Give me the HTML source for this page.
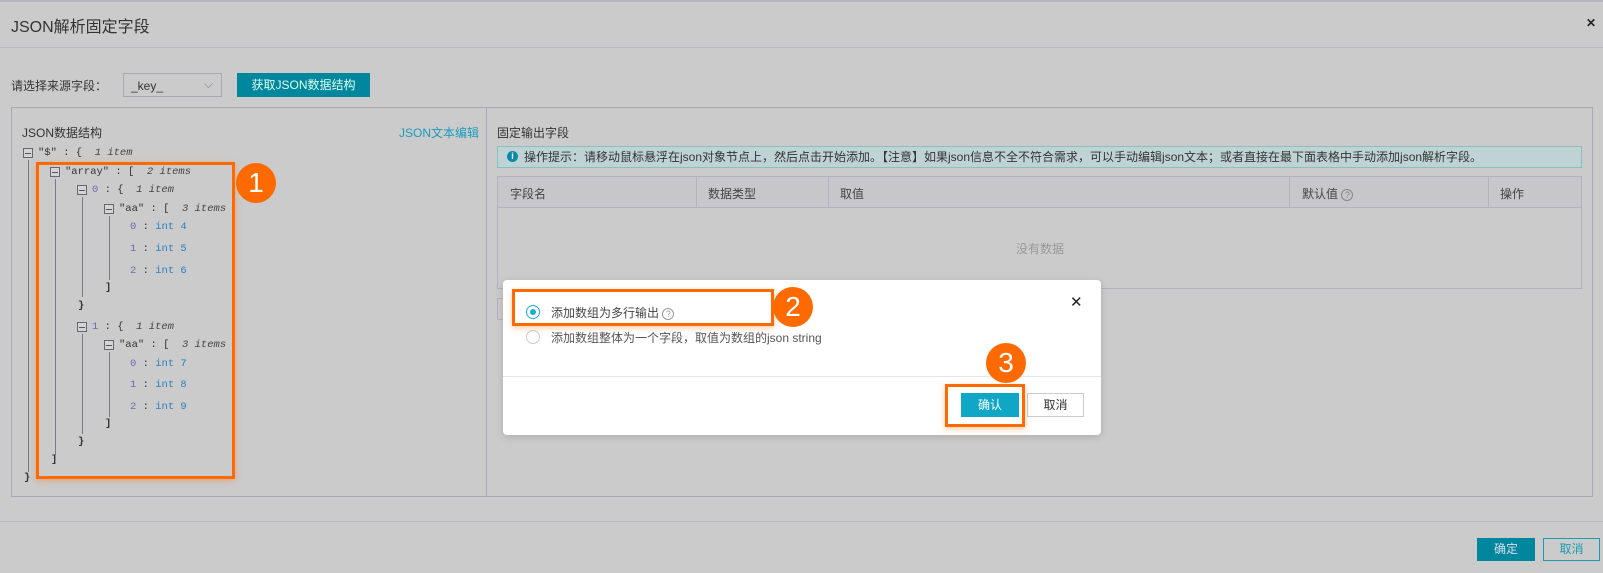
<!DOCTYPE html>
<html><head><meta charset="utf-8"><style>
*{margin:0;padding:0;box-sizing:border-box}
body{width:1603px;height:573px;background:#cbcbcb;font-family:"Liberation Sans","Noto Sans CJK SC",sans-serif;color:#3c3c3c;position:relative;overflow:hidden;font-size:12px}
.a{position:absolute;white-space:nowrap}
.t{font-family:"Liberation Mono","DejaVu Sans Mono",monospace;font-size:10.5px;color:#333;line-height:14px}
.t i{color:#444}
.k{color:#6a6ab8}.n{color:#2a7fc0}
.ic{position:absolute;width:10px;height:10px;border:1px solid #667;background:#d4d4d4}
.ic:after{content:"";position:absolute;left:1px;right:1px;top:3.5px;height:1px;background:#556}
.vl{position:absolute;width:1px;background:#7a7a88}
.circ{position:absolute;width:40px;height:40px;border-radius:50%;background:#ff6a00;color:#fff;font-size:28px;text-align:center;line-height:40px}
.ob{position:absolute;border:3px solid #ff6a00;box-shadow:0 2px 6px rgba(255,106,0,.35)}
</style></head><body>
<div class="a" style="left:0;top:0;width:1603px;height:2px;background:#b4b4c0"></div>
<div class="a" style="left:11px;top:13px;font-size:16px;color:#333">JSON解析固定字段</div>
<div class="a" style="left:1586px;top:16px;font-size:12px;font-weight:bold;color:#222">✕</div>
<div class="a" style="left:0;top:47px;width:1603px;height:1px;background:#b8b8c6"></div>
<div class="a" style="left:11px;top:77px;color:#333">请选择来源字段：</div>
<div class="a" style="left:123px;top:73px;width:99px;height:24px;border:1px solid #a8a8b4;padding:5px 7px;color:#333">_key_<span style="position:absolute;right:8px;top:3px;color:#888;font-size:12px">⌵</span></div>
<div class="a" style="left:237px;top:73px;width:133px;height:24px;background:#00879e;color:#dfe;text-align:center;line-height:24px">获取JSON数据结构</div>

<div class="a" style="left:11px;top:107px;width:476px;height:390px;border:1px solid #a8a8b8"></div>
<div class="a" style="left:486px;top:107px;width:1107px;height:390px;border:1px solid #a8a8b8"></div>
<div class="a" style="left:22px;top:124px;color:#333">JSON数据结构</div>
<div class="a" style="left:399px;top:124px;color:#1a9cbc">JSON文本编辑</div>

<!-- tree -->
<div class="ic" style="left:23px;top:148px"></div><div class="a t" style="left:38px;top:146px">"$" : { &nbsp;<i>1 item</i></div>
<div class="vl" style="left:28px;top:160px;height:312px"></div>
<div class="ic" style="left:50px;top:167px"></div><div class="a t" style="left:65px;top:165px">"array" : [ &nbsp;<i>2 items</i></div>
<div class="vl" style="left:55px;top:179px;height:276px"></div>
<div class="ic" style="left:77px;top:185px"></div><div class="a t" style="left:92px;top:183px"><span class="k">0</span> : { &nbsp;<i>1 item</i></div>
<div class="vl" style="left:82px;top:197px;height:100px"></div>
<div class="ic" style="left:104px;top:204px"></div><div class="a t" style="left:119px;top:202px">"aa" : [ &nbsp;<i>3 items</i></div>
<div class="vl" style="left:109px;top:216px;height:64px"></div>
<div class="a t" style="left:130px;top:220px"><span class="k">0</span> : <span class="n">int 4</span></div>
<div class="a t" style="left:130px;top:242px"><span class="k">1</span> : <span class="n">int 5</span></div>
<div class="a t" style="left:130px;top:264px"><span class="k">2</span> : <span class="n">int 6</span></div>
<div class="a t" style="left:105px;top:281px"><b>]</b></div>
<div class="a t" style="left:78px;top:299px"><b>}</b></div>
<div class="ic" style="left:77px;top:322px"></div><div class="a t" style="left:92px;top:320px"><span class="k">1</span> : { &nbsp;<i>1 item</i></div>
<div class="vl" style="left:82px;top:334px;height:100px"></div>
<div class="ic" style="left:104px;top:340px"></div><div class="a t" style="left:119px;top:338px">"aa" : [ &nbsp;<i>3 items</i></div>
<div class="vl" style="left:109px;top:352px;height:65px"></div>
<div class="a t" style="left:130px;top:357px"><span class="k">0</span> : <span class="n">int 7</span></div>
<div class="a t" style="left:130px;top:378px"><span class="k">1</span> : <span class="n">int 8</span></div>
<div class="a t" style="left:130px;top:400px"><span class="k">2</span> : <span class="n">int 9</span></div>
<div class="a t" style="left:105px;top:417px"><b>]</b></div>
<div class="a t" style="left:78px;top:435px"><b>}</b></div>
<div class="a t" style="left:51px;top:453px"><b>]</b></div>
<div class="a t" style="left:24px;top:471px"><b>}</b></div>
<div class="ob" style="left:36px;top:162px;width:199px;height:317px"></div>
<div class="circ" style="left:236px;top:163px">1</div>

<!-- right -->
<div class="a" style="left:497px;top:124px;color:#333">固定输出字段</div>
<div class="a" style="left:497px;top:146px;width:1085px;height:22px;background:#bfd3d5;border:1px solid #88c0c6;padding-left:26px;line-height:20px;color:#333">操作提示：请移动鼠标悬浮在json对象节点上，然后点击开始添加。【注意】如果json信息不全不符合需求，可以手动编辑json文本；或者直接在最下面表格中手动添加json解析字段。</div>
<div class="a" style="left:507px;top:151px;width:11px;height:11px;border-radius:50%;background:#0a8aaa;color:#fff;font-size:9px;text-align:center;line-height:11px;font-weight:bold">i</div>
<div class="a" style="left:497px;top:176px;width:1085px;height:113px;border:1px solid #b2b2c2"></div>
<div class="a" style="left:498px;top:177px;width:1083px;height:31px;background:#c6c6cb;border-bottom:1px solid #b2b2c2"></div>
<div class="a" style="left:696px;top:177px;width:1px;height:31px;background:#b2b2c2"></div>
<div class="a" style="left:828px;top:177px;width:1px;height:31px;background:#b2b2c2"></div>
<div class="a" style="left:1289px;top:177px;width:1px;height:31px;background:#b2b2c2"></div>
<div class="a" style="left:1488px;top:177px;width:1px;height:31px;background:#b2b2c2"></div>
<div class="a" style="left:510px;top:185px;color:#444">字段名</div>
<div class="a" style="left:708px;top:185px;color:#444">数据类型</div>
<div class="a" style="left:840px;top:185px;color:#444">取值</div>
<div class="a" style="left:1302px;top:185px;color:#444">默认值 <span style="display:inline-block;width:12px;height:12px;border:1px solid #888;border-radius:50%;font-size:9px;text-align:center;line-height:11px;color:#888">?</span></div>
<div class="a" style="left:1500px;top:185px;color:#444">操作</div>
<div class="a" style="left:1016px;top:240px;color:#999">没有数据</div>
<div class="a" style="left:497px;top:298px;width:10px;height:22px;border:1px solid #b2b2c2;border-right:none"></div>

<div class="a" style="left:0;top:521px;width:1603px;height:1px;background:#b8b8c6"></div>
<div class="a" style="left:1477px;top:538px;width:58px;height:23px;background:#00879e;color:#dde;text-align:center;line-height:23px">确定</div>
<div class="a" style="left:1543px;top:538px;width:57px;height:23px;border:1px solid #1a9cb4;color:#1a9cb4;text-align:center;line-height:21px">取消</div>

<!-- dialog -->
<div class="a" style="left:503px;top:280px;width:598px;height:155px;background:#fff;border-radius:4px;box-shadow:0 2px 8px rgba(0,0,0,.15)"></div>
<div class="a" style="left:1070px;top:293px;font-size:15px;color:#222">✕</div>
<div class="a" style="left:526px;top:305px;width:14px;height:14px;border-radius:50%;border:1px solid #1aaecc"><div style="position:absolute;left:3px;top:3px;width:6px;height:6px;border-radius:50%;background:#1aaecc"></div></div>
<div class="a" style="left:551px;top:304px;font-size:12px;color:#444">添加数组为多行输出 <span style="display:inline-block;width:12px;height:12px;border:1px solid #999;border-radius:50%;font-size:9px;text-align:center;line-height:11px;color:#999">?</span></div>
<div class="a" style="left:526px;top:330px;width:14px;height:14px;border-radius:50%;border:1px solid #ccc"></div>
<div class="a" style="left:551px;top:329px;font-size:12px;color:#555">添加数组整体为一个字段，取值为数组的json string</div>
<div class="ob" style="left:512px;top:289px;width:262px;height:37px"></div>
<div class="circ" style="left:773px;top:287px">2</div>
<div class="a" style="left:503px;top:376px;width:598px;height:1px;background:#e6e6ee"></div>
<div class="a" style="left:961px;top:393px;width:58px;height:24px;background:#10a6c6;color:#fff;text-align:center;line-height:24px">确认</div>
<div class="a" style="left:1027px;top:393px;width:57px;height:24px;border:1px solid #ccc;color:#333;text-align:center;line-height:22px">取消</div>
<div class="ob" style="left:945px;top:384px;width:80px;height:43px"></div>
<div class="circ" style="left:986px;top:343px">3</div>
</body></html>
